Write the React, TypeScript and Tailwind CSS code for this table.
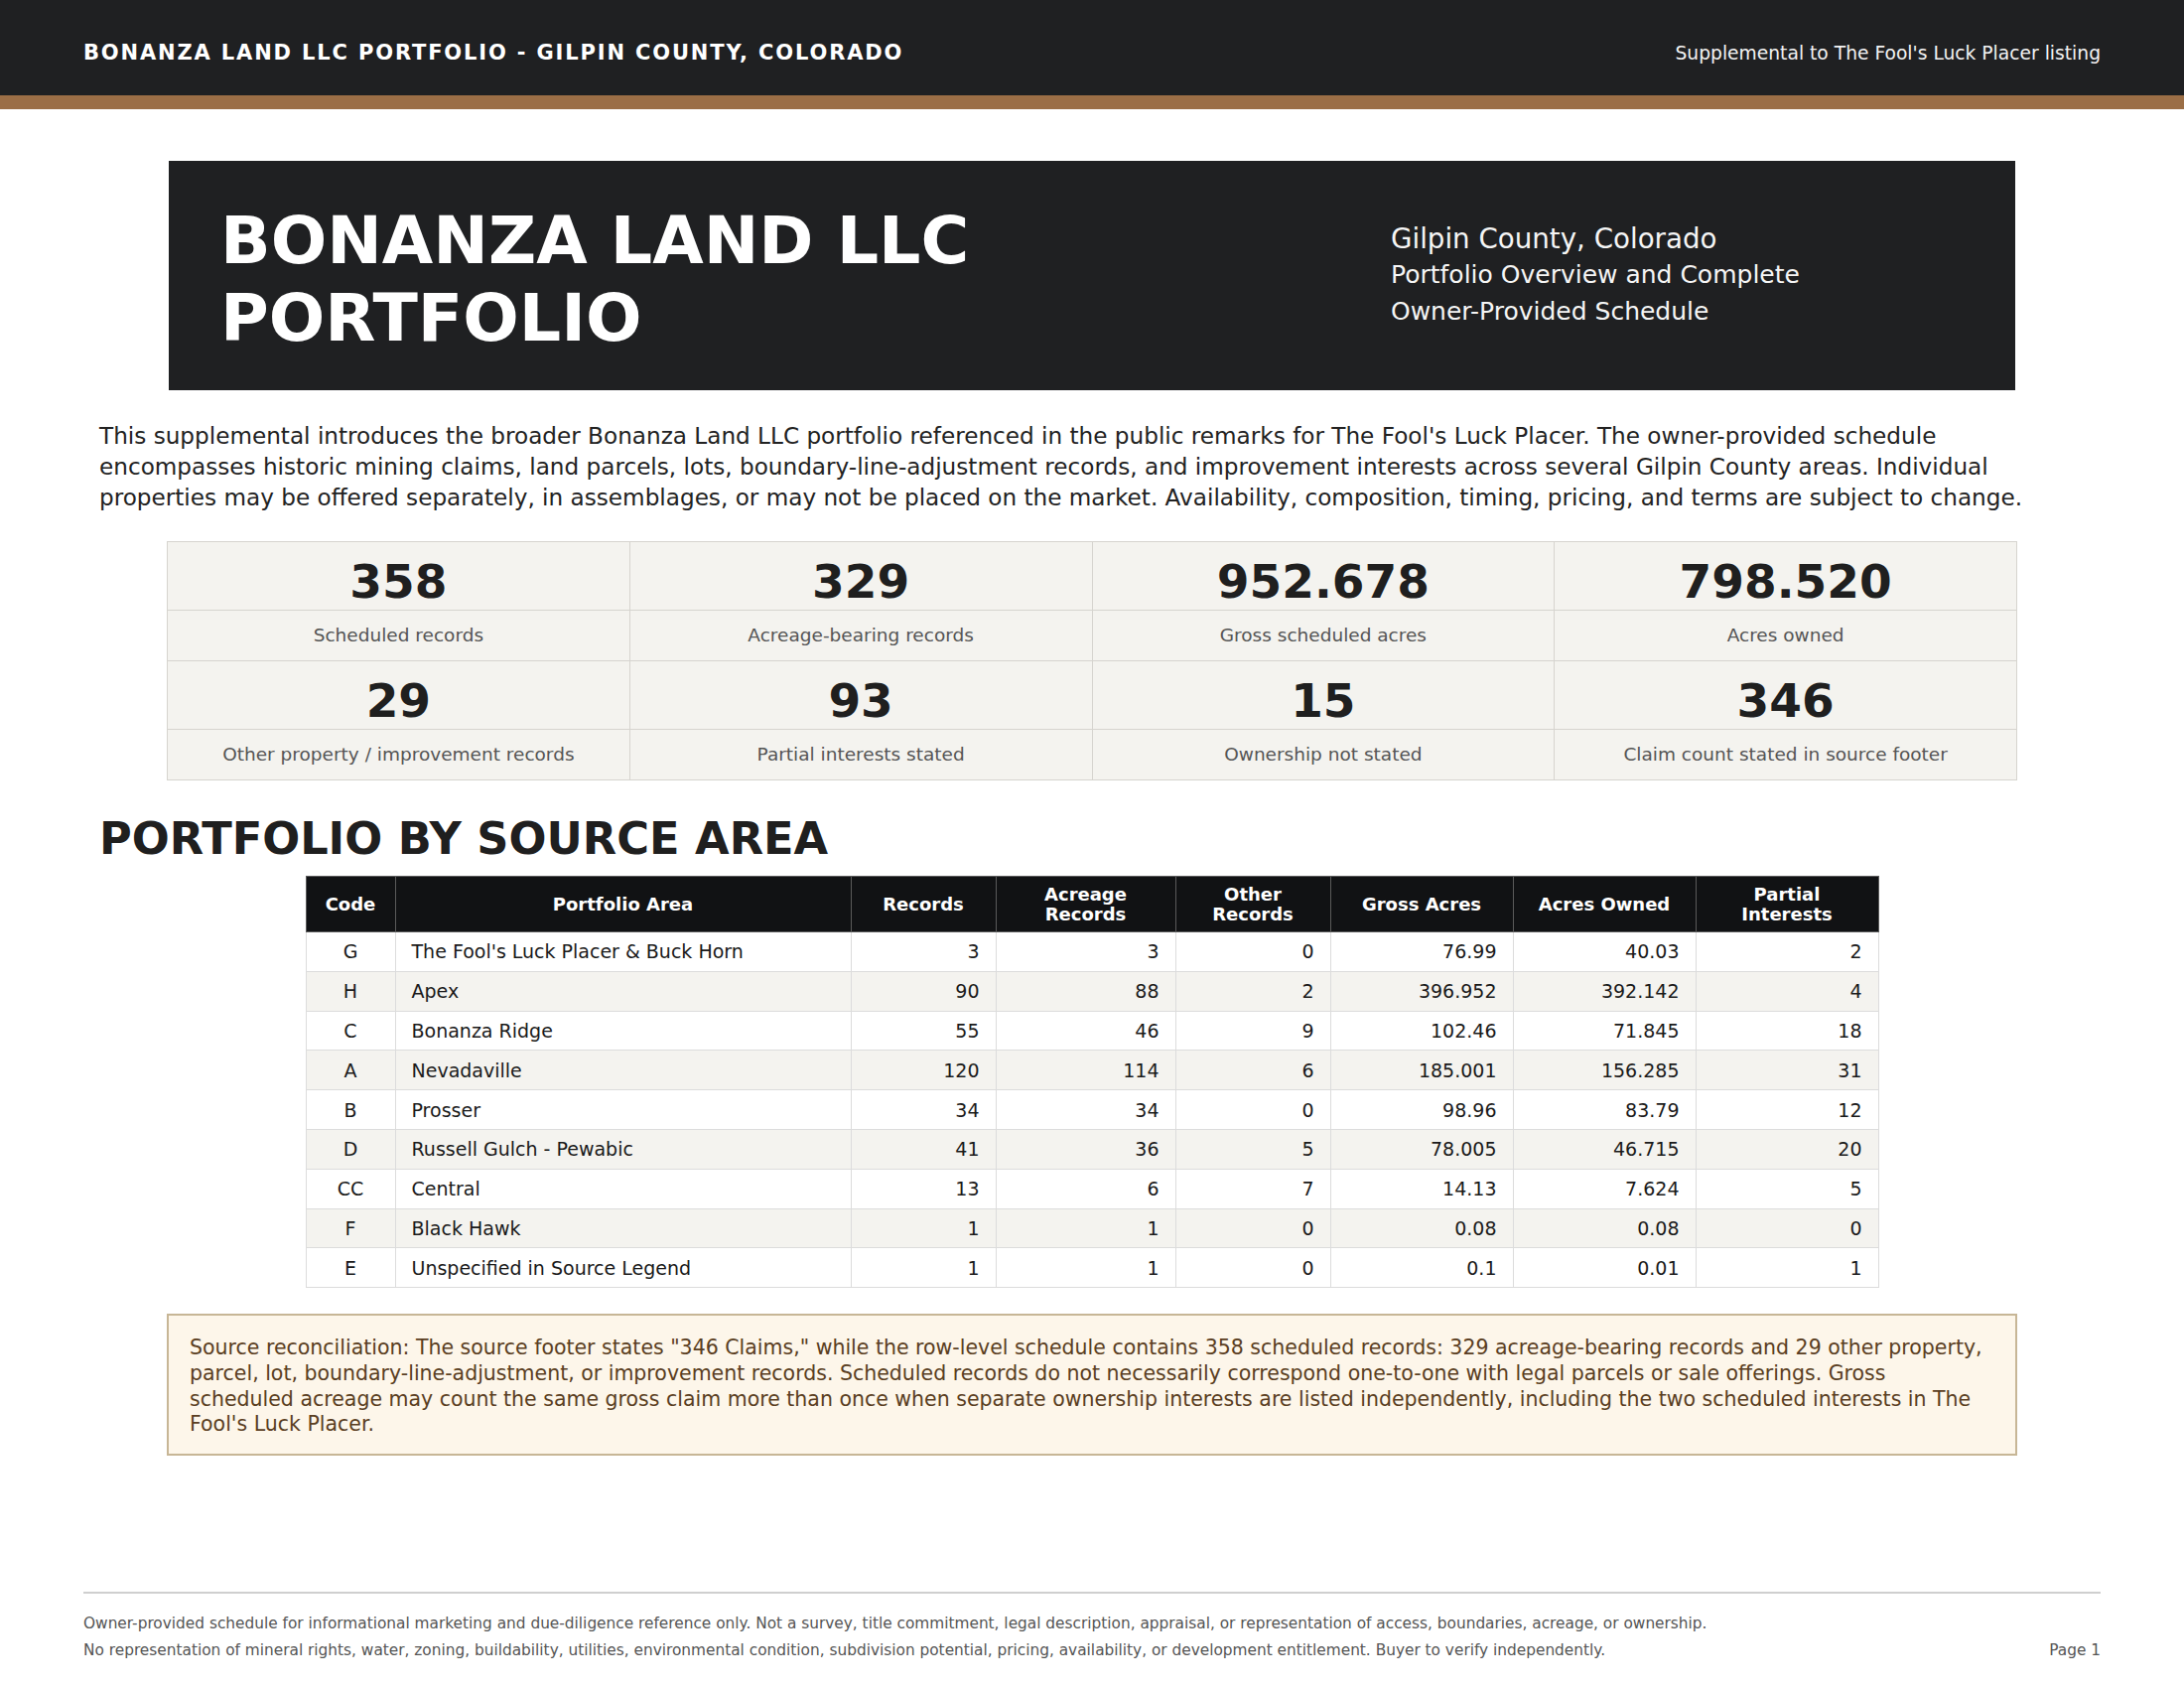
import React from "react";

const rows: string[][] = [
  ["G", "The Fool's Luck Placer & Buck Horn", "3", "3", "0", "76.99", "40.03", "2"],
  ["H", "Apex", "90", "88", "2", "396.952", "392.142", "4"],
  ["C", "Bonanza Ridge", "55", "46", "9", "102.46", "71.845", "18"],
  ["A", "Nevadaville", "120", "114", "6", "185.001", "156.285", "31"],
  ["B", "Prosser", "34", "34", "0", "98.96", "83.79", "12"],
  ["D", "Russell Gulch - Pewabic", "41", "36", "5", "78.005", "46.715", "20"],
  ["CC", "Central", "13", "6", "7", "14.13", "7.624", "5"],
  ["F", "Black Hawk", "1", "1", "0", "0.08", "0.08", "0"],
  ["E", "Unspecified in Source Legend", "1", "1", "0", "0.1", "0.01", "1"],
];

const stats1 = [
  ["358", "Scheduled records"],
  ["329", "Acreage-bearing records"],
  ["952.678", "Gross scheduled acres"],
  ["798.520", "Acres owned"],
];
const stats2 = [
  ["29", "Other property / improvement records"],
  ["93", "Partial interests stated"],
  ["15", "Ownership not stated"],
  ["346", "Claim count stated in source footer"],
];

function StatNumbers({ items }: { items: string[][] }) {
  return (
    <>
      {items.map(([n]) => (
        <div key={n} className="h-[68px] bg-[#f4f3ef] pt-[12px] text-center text-[47px] font-bold leading-[56px] text-[#1f1f1f]">
          {n}
        </div>
      ))}
    </>
  );
}

function StatLabels({ items }: { items: string[][] }) {
  return (
    <>
      {items.map(([n, l]) => (
        <div key={n + l} className="flex h-[50px] items-center justify-center bg-[#f4f3ef] text-[18.5px] text-[#555555]">
          {l}
        </div>
      ))}
    </>
  );
}

export default function App() {
  const font = { fontFamily: '"DejaVu Sans", "Liberation Sans", sans-serif' };
  return (
    <div className="min-h-[1700px] w-[2200px] bg-white" style={font}>
      {/* Top bar */}
      <header className="border-b-[14px] border-[#9b6e46] bg-[#1f2022]">
        <div className="flex h-[96px] items-center justify-between px-[84px] pt-[12px]">
          <div className="text-[21px] font-bold tracking-[1.85px] text-white">
            BONANZA LAND LLC PORTFOLIO - GILPIN COUNTY, COLORADO
          </div>
          <div className="text-[18.7px] text-[#f2f2f2]">Supplemental to The Fool's Luck Placer listing</div>
        </div>
      </header>

      <main className="px-[100px]">
        {/* Hero */}
        <section className="mx-[70px] mt-[52px] grid h-[231px] grid-cols-[1150px_500px] items-center gap-[29px] bg-[#1f2022] px-[52px]">
          <h1 className="pt-[6px] text-[66.5px] font-bold leading-[78px] text-white">BONANZA LAND LLC PORTFOLIO</h1>
          <div className="text-[25px] leading-[36.5px] text-[#f5f5f5]">
            <div className="text-[27.7px]">Gilpin County, Colorado</div>
            <div>Portfolio Overview and Complete</div>
            <div>Owner-Provided Schedule</div>
          </div>
        </section>

        {/* Intro paragraph */}
        <p className="mt-[31px] text-[23.15px] leading-[31px] text-[#222222]">
          This supplemental introduces the broader Bonanza Land LLC portfolio referenced in the public remarks for The
          Fool's Luck Placer. The owner-provided schedule encompasses historic mining claims, land parcels, lots,
          boundary-line-adjustment records, and improvement interests across several Gilpin County areas. Individual
          properties may be offered separately, in assemblages, or may not be placed on the market. Availability,
          composition, timing, pricing, and terms are subject to change.
        </p>

        {/* Stats */}
        <section className="mx-[68px] mt-[28px] grid grid-cols-4 gap-px border border-[#d6d4cf] bg-[#d6d4cf]">
          <StatNumbers items={stats1} />
          <StatLabels items={stats1} />
          <StatNumbers items={stats2} />
          <StatLabels items={stats2} />
        </section>

        {/* Section title */}
        <h2 className="mt-[33px] text-[44.7px] font-bold leading-[53px] text-[#1f1f1f]">PORTFOLIO BY SOURCE AREA</h2>

        {/* Table */}
        <table className="mx-auto mt-[10px] w-[1584px] table-fixed border-collapse text-[19px] text-[#1a1a1a]">
          <colgroup>
            <col className="w-[90px]" />
            <col className="w-[459px]" />
            <col className="w-[146px]" />
            <col className="w-[181px]" />
            <col className="w-[156px]" />
            <col className="w-[184px]" />
            <col className="w-[184px]" />
            <col className="w-[184px]" />
          </colgroup>
          <thead>
            <tr className="h-[56px] bg-[#111214] text-white">
              {[
                "Code",
                "Portfolio Area",
                "Records",
                "Acreage Records",
                "Other Records",
                "Gross Acres",
                "Acres Owned",
                "Partial Interests",
              ].map((h) => (
                <th
                  key={h}
                  className="border border-[#5a5a5a] px-[12px] text-center text-[18px] font-bold leading-[20px]"
                >
                  {h === "Acreage Records" ? (
                    <>
                      Acreage
                      <br />
                      Records
                    </>
                  ) : h === "Other Records" ? (
                    <>
                      Other
                      <br />
                      Records
                    </>
                  ) : h === "Partial Interests" ? (
                    <>
                      Partial
                      <br />
                      Interests
                    </>
                  ) : (
                    h
                  )}
                </th>
              ))}
            </tr>
          </thead>
          <tbody>
            {rows.map((r, i) => (
              <tr key={r[0]} className={`h-[39.8px] ${i % 2 === 1 ? "bg-[#f4f3ef]" : "bg-white"}`}>
                {r.map((c, j) => (
                  <td
                    key={j}
                    className={`border border-[#dcdcdc] px-[16px] leading-[22px] ${
                      j === 0 ? "text-center" : j === 1 ? "text-left" : "text-right"
                    }`}
                  >
                    {c}
                  </td>
                ))}
              </tr>
            ))}
          </tbody>
        </table>

        {/* Note */}
        <section className="mx-[68px] mt-[26px] border-2 border-[#c7b696] bg-[#fdf6ea] px-[21px] pb-[16px] pt-[20px] text-[20.5px] leading-[25.7px] text-[#5a3e22]">
          Source reconciliation: The source footer states "346 Claims," while the row-level schedule contains 358 scheduled
          records: 329 acreage-bearing records and 29 other property, parcel, lot, boundary-line-adjustment, or improvement
          records. Scheduled records do not necessarily correspond one-to-one with legal parcels or sale offerings. Gross
          scheduled acreage may count the same gross claim more than once when separate ownership interests are listed
          independently, including the two scheduled interests in The Fool's Luck Placer.
        </section>
      </main>

      {/* Footer */}
      <footer className="mx-[84px] mt-[137px] border-t-2 border-[#cfcfcf] pt-[17px] text-[15.35px] leading-[27px] text-[#555555]">
        <div>
          Owner-provided schedule for informational marketing and due-diligence reference only. Not a survey, title
          commitment, legal description, appraisal, or representation of access, boundaries, acreage, or ownership.
        </div>
        <div className="flex justify-between">
          <span>
            No representation of mineral rights, water, zoning, buildability, utilities, environmental condition,
            subdivision potential, pricing, availability, or development entitlement. Buyer to verify independently.
          </span>
          <span>Page 1</span>
        </div>
      </footer>
    </div>
  );
}
